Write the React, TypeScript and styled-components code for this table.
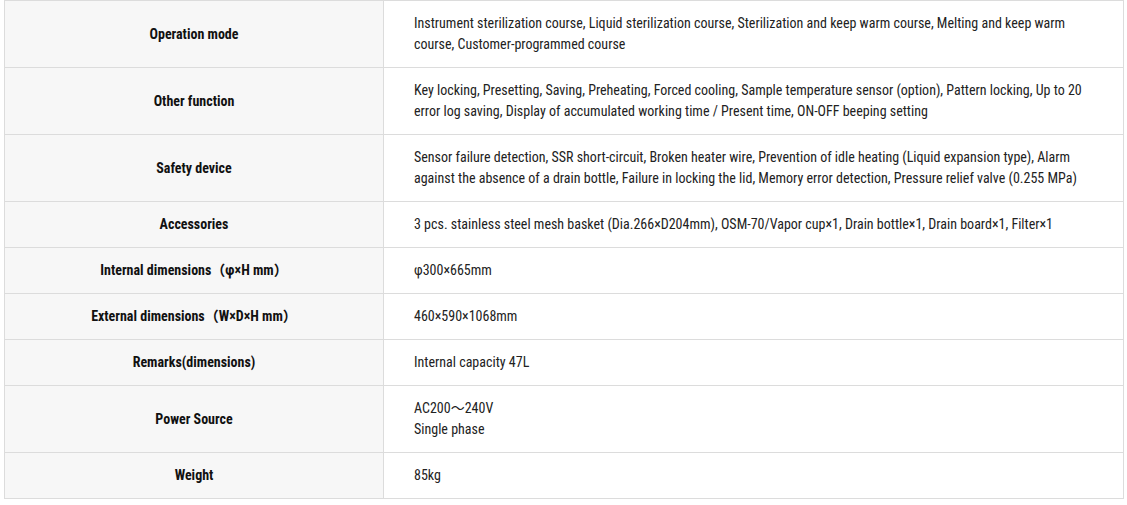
import React from 'react';
import styled, { createGlobalStyle } from 'styled-components';

const GlobalStyle = createGlobalStyle`
  html, body {
    margin: 0;
    padding: 0;
    background: #fff;
  }
  body {
    font-family: "Roboto Condensed", "Liberation Sans Narrow", Roboto, "Noto Sans CJK SC", sans-serif;
    font-stretch: condensed;
    color: #222;
  }
`;

const Wrapper = styled.div`
  padding: 0 3px 0 4px;
`;

const SpecTable = styled.table`
  width: 100%;
  border-collapse: collapse;
  table-layout: fixed;
  font-size: 14px;
  line-height: 21px;
`;

const LabelCol = styled.col`
  width: 379px;
`;

const Label = styled.th`
  background: #f7f7f7;
  border: 1px solid #dcdcdc;
  padding: 12px 20px;
  font-weight: 700;
  text-align: center;
  vertical-align: middle;
  color: #111;
`;

const Value = styled.td`
  border: 1px solid #dcdcdc;
  padding: 12px 30px 12px 30px;
  text-align: left;
  vertical-align: middle;
  color: #222;
`;

const specs: { label: string; value: React.ReactNode }[] = [
  {
    label: 'Operation mode',
    value:
      'Instrument sterilization course, Liquid sterilization course, Sterilization and keep warm course, Melting and keep warm course, Customer-programmed course',
  },
  {
    label: 'Other function',
    value:
      'Key locking, Presetting, Saving, Preheating, Forced cooling, Sample temperature sensor (option), Pattern locking, Up to 20 error log saving, Display of accumulated working time / Present time, ON-OFF beeping setting',
  },
  {
    label: 'Safety device',
    value:
      'Sensor failure detection, SSR short-circuit, Broken heater wire, Prevention of idle heating (Liquid expansion type), Alarm against the absence of a drain bottle, Failure in locking the lid, Memory error detection, Pressure relief valve (0.255 MPa)',
  },
  {
    label: 'Accessories',
    value:
      '3 pcs. stainless steel mesh basket (Dia.266×D204mm), OSM-70/Vapor cup×1, Drain bottle×1, Drain board×1, Filter×1',
  },
  { label: 'Internal dimensions（φ×H mm）', value: 'φ300×665mm' },
  { label: 'External dimensions（W×D×H mm）', value: '460×590×1068mm' },
  { label: 'Remarks(dimensions)', value: 'Internal capacity 47L' },
  {
    label: 'Power Source',
    value: (
      <>
        AC200～240V
        <br />
        Single phase
      </>
    ),
  },
  { label: 'Weight', value: '85kg' },
];

const App: React.FC = () => {
  return (
    <>
      <GlobalStyle />
      <Wrapper>
        <SpecTable>
          <colgroup>
            <LabelCol />
            <col />
          </colgroup>
          <tbody>
            {specs.map((row) => (
              <tr key={row.label}>
                <Label>{row.label}</Label>
                <Value>{row.value}</Value>
              </tr>
            ))}
          </tbody>
        </SpecTable>
      </Wrapper>
    </>
  );
};

export default App;
